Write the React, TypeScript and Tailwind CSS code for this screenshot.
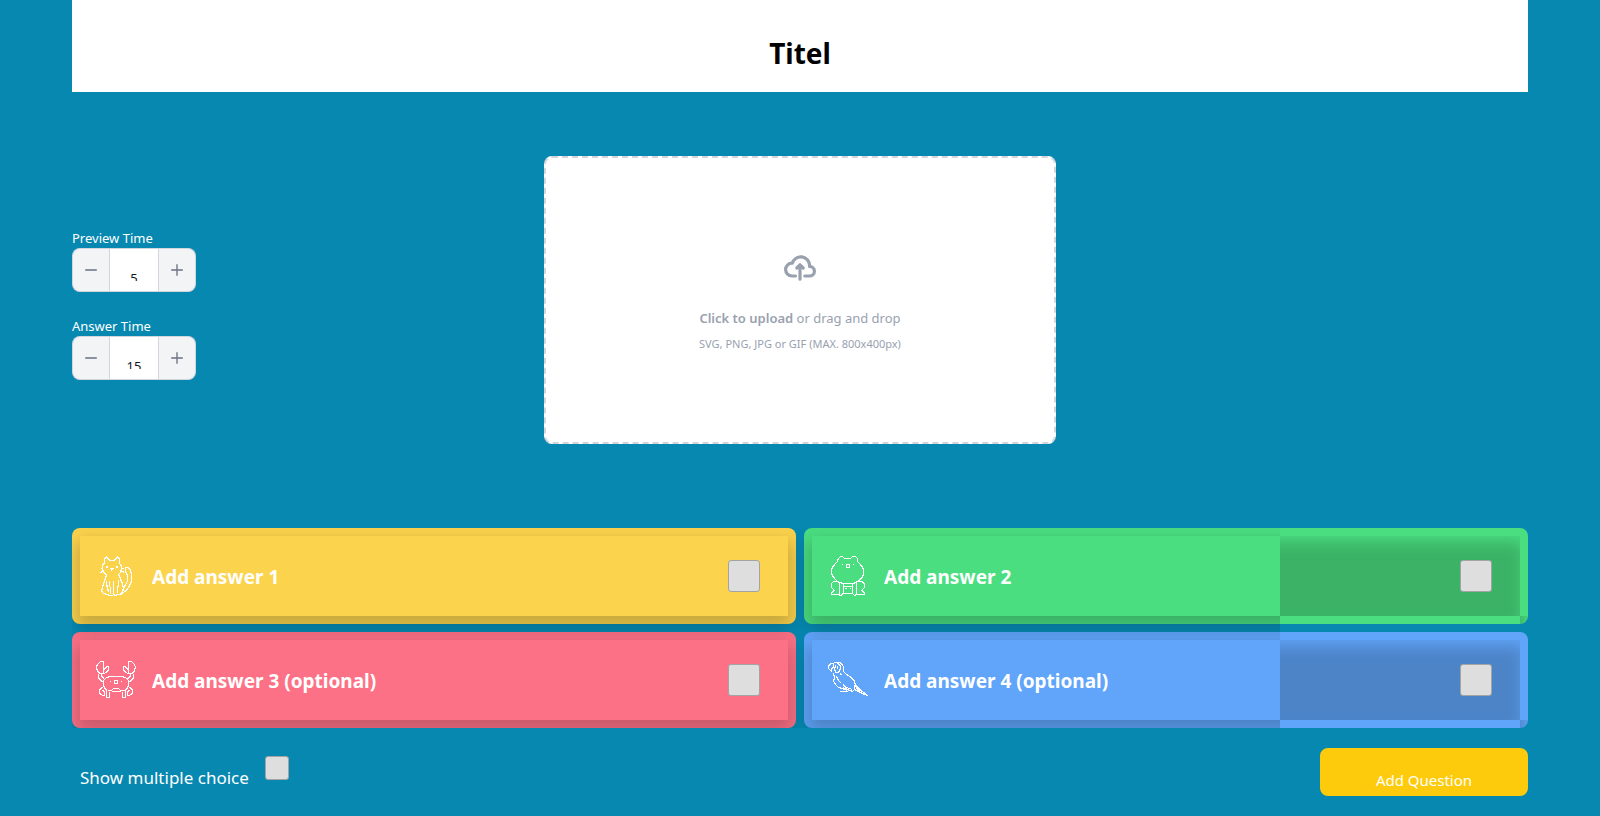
import { useState, type ReactNode } from "react";

const strokeProps = {
  width: 40,
  height: 40,
  viewBox: "0 0 40 40",
  fill: "none",
  stroke: "#fff",
  strokeWidth: 1.25,
  shapeRendering: "crispEdges" as const,
  "aria-hidden": true,
};

function CatIcon() {
  return (
    <svg {...strokeProps}>
      <path d="M6.500 13V9.500L8.500 7V3L10.500 .5L13.500 4.500H18.500L21.500 .5L23.500 3V7L25.500 10.500V13L24.500 16.500L22.500 18.500L24.500 23L26.500 28L27.500 33L26.500 36.500L23.500 38.500H19.500" />
      <path d="M6.500 13.500L7.500 16.500L10.500 18.500L9.500 22.500L7.500 27.500L6.500 32L5.500 35L7.500 37.500L11.500 38.500L13.500 39.500H16.500L17.500 38.500L19.500 39.500L21.500 38.500" />
      <path d="M4.500 12.500H7M4.500 16.500L8 14.500M25 12.500H27.500M25 14.500L28 16.500" />
      <path d="M13.500 24.500V30L14.500 32V38M17.500 25V38M22.500 24V29L21.500 32V37M10.500 25V28L11.500 32L12.500 36" />
      <path d="M29.500 15.500V11.500H32.500L34.500 14.500L35.500 18V25L33.500 30L30.500 34L27.500 36.500L24.500 38.500M29.500 15.500L31.500 19V25L29.500 29L27.500 32.500L26 34" />
      <path d="M10 10h2v2h-2zM20 10h2v2h-2zM14 11.500h4v1h-1v1h-1v1h-1v-2h-1z" fill="#fff" stroke="none" />
    </svg>
  );
}

function BearIcon() {
  return (
    <svg {...strokeProps}>
      <path d="M9.500 5.500L10.500 2.500L12.500 .5H14.500L16.500 2.500H22.500L24.500 .5H27.500L29.500 2.500V5.500L32.500 8.500L35.500 13V19L33.500 22.500L29.500 25.500L25.500 27.500H14.500L9.500 25.500L6.500 22.500L3.500 18V13L6.500 8.500L9.500 5.500" />
      <path d="M18.500 8.500h3v3h-3z" />
      <path d="M14 8h1v1h-1zM25 8h1v1h-1z" fill="#fff" stroke="none" />
      <path d="M9.500 25.500H5.500L3.500 27.500V31.500L6.500 34.500L3.500 36.500V38.500H10.500L12.500 39.500L15.500 37.500M29.500 25.500H33.500L36.500 27.500V31.500L33.500 34.500L36.500 36.500V38.500H28.500L26.500 39.500L24.500 37.500" />
      <path d="M11.500 26.500V38M15.500 28V37.500H24.500V28M28.500 27V38M15.500 30.500H24M17 32.500H18.500M21.500 32.500H23" />
    </svg>
  );
}

function CrabIcon() {
  return (
    <svg {...strokeProps}>
      <path d="M7.500 13.500V1.500H4.500L1.500 4.500L.5 7.500L1.500 10.500L3.500 13.500H7.500L10.500 12.500L12.500 9.500V6.500H10.500L8.500 9.500H7.500" />
      <path d="M32.500 13.500V1.500H35.500L38.500 4.500L39.500 7.500L38.500 10.500L36.500 13.500H32.500L29.500 12.500L27.500 9.500V6.500H29.500L31.500 9.500H32.500" />
      <path d="M2.500 14V17.500L5.500 21.500H7.500M5.500 14V16.500L8.500 18.500M37.500 14V17.500L34.500 21.500H32.500M34.500 14V16.500L31.500 18.500" />
      <path d="M11.500 30.500L8.500 28.500L7.500 25V20.500L10.500 17.500L14.500 16.500H25.500L29.500 17.500L32.500 20.500V25L31.500 28.500L28.500 30.500M11.500 30.500H15.500L17.500 28.500H22.500L24.500 30.500H28.500M15.500 31.500H24.500" />
      <path d="M18.500 20.500h3v3h-3z" />
      <path d="M14 21h1v1h-1zM25 21h1v1h-1z" fill="#fff" stroke="none" />
      <path d="M10.500 31V37.500H13.500V31.500M26.500 31.500V37.500H29.500V31M6.500 27L3.500 30V33L6.500 35.500H8.500V32L6.500 30M33.500 27L36.500 30V33L33.500 35.500H31.500V32L33.500 30" />
    </svg>
  );
}

function ParrotIcon() {
  return (
    <svg {...strokeProps}>
      <path d="M3.500 11.500L.5 8.500V5.500L3.500 3.500H5.500V7.500L3.500 8.500V11.500M4.500 3.500L7.500 2.500H11.500L14.500 4.500L15.500 7.500V11.500L18.500 14.500L23.500 17.500L26.500 21.500L27.500 25L31.500 29L35.500 32.500L39.500 35.500L34.500 33.500L28.500 30.500L26.500 29.500V24.500" />
      <path d="M5.500 13.500L6.500 18L5.500 21L7.500 24.500L10.500 27.500L14.500 28.500L19.500 29.500L24.500 31.500L26.500 29.500M7.500 5.500L6.500 9L7.500 12.500H10.500L12.500 9V5.500L9.500 3.500M9.500 6V9" />
      <path d="M8.500 16.500L10.500 20.500L13.500 23.500M14.500 24.500L18.500 27.500L24.500 29.500M12.500 13.500L13.500 15.500M15.500 27V30M18.500 28V30.500M12 31.500H19.500M27.500 26.500L31.500 31" />
    </svg>
  );
}

function CheckBox({ label, className }: { label: string; className: string }) {
  return (
    <input
      type="checkbox"
      aria-label={label}
      className={`shrink-0 appearance-none rounded-[3px] border border-[#a3a3a3] bg-[#dedede] checked:bg-cyan-700 ${className}`}
    />
  );
}

function TimeInput({ id, label, initial }: { id: string; label: string; initial: number }) {
  const [value, setValue] = useState(initial);
  const button = "flex items-center justify-center border-gray-300 bg-gray-100 text-gray-500";
  return (
    <div className="w-[124px]">
      <label htmlFor={id} className="block text-[13px] leading-5 text-white">
        {label}
      </label>
      <div className="flex h-11">
        <button
          type="button"
          aria-label={`Decrease ${label}`}
          onClick={() => setValue(Math.max(0, value - 1))}
          className={`${button} w-[37px] shrink-0 rounded-l-lg border border-r-0`}
        >
          <svg className="h-3 w-3" fill="none" viewBox="0 0 18 2" aria-hidden="true">
            <path stroke="currentColor" strokeLinecap="round" strokeWidth="2" d="M1 1h16" />
          </svg>
        </button>
        <div className="h-11 min-w-0 flex-1 border border-gray-300 bg-white pt-4">
          <input
            id={id}
            type="text"
            value={value}
            onChange={(e) => setValue(Number(e.target.value) || 0)}
            className="block h-4 w-full overflow-clip bg-transparent pt-[10px] text-center text-[13px] leading-5 text-gray-900 outline-none"
          />
        </div>
        <button
          type="button"
          aria-label={`Increase ${label}`}
          onClick={() => setValue(value + 1)}
          className={`${button} w-[37px] shrink-0 rounded-r-lg border border-l-0`}
        >
          <svg className="h-3 w-3" fill="none" viewBox="0 0 18 18" aria-hidden="true">
            <path stroke="currentColor" strokeLinecap="round" strokeWidth="2" d="M9 1v16M1 9h16" />
          </svg>
        </button>
      </div>
    </div>
  );
}

interface AnswerProps {
  n: number;
  text: string;
  color: string;
  icon: ReactNode;
  shade?: string;
}

function Answer({ n, text, color, icon, shade }: AnswerProps) {
  return (
    <div className={`rounded-lg p-2 ${color}`}>
      <div className="relative isolate">
        <div
          className={`absolute inset-0 -z-10 shadow-[0_9px_16px_4px_rgba(0,0,0,0.2)] ${color} ${
            shade ? "[clip-path:inset(-24px_240px_-24px_-24px)]" : ""
          }`}
        />
        {shade && (
          <>
            <div className="absolute inset-y-0 right-0 -z-10 w-60 overflow-hidden">
              <div className={`ml-[-32px] h-full ${shade}`} />
            </div>
            <div className="absolute -right-2 -bottom-2 -z-10 h-2 w-2 rounded-br-lg bg-linear-to-r from-black/15 to-black/5" />
          </>
        )}
        <div className="flex h-20 items-center gap-4 pr-7 pl-4">
          {icon}
          <input
            type="text"
            aria-label={`Answer ${n}`}
            placeholder={text}
            className="min-w-0 flex-1 bg-transparent pt-0.5 text-[19px] leading-7 font-bold text-white outline-none placeholder:text-white placeholder:opacity-100"
          />
          <CheckBox label={`Answer ${n} is correct`} className="h-8 w-8" />
        </div>
      </div>
    </div>
  );
}

export default function App() {
  return (
    <div className="min-h-screen bg-[#0788b1] px-[4.5%] font-['Noto_Sans','Open_Sans',sans-serif]">
      <header className="flex h-23 items-center justify-center bg-white pt-3.5">
        <h1 className="text-[28px] leading-9 font-bold text-black">Titel</h1>
      </header>

      <main>
        <section className="grid grid-cols-[1fr_minmax(0,512px)_1fr] items-center pt-16 pb-21">
          <div className="flex flex-col gap-6 pt-2">
            <TimeInput id="preview-time" label="Preview Time" initial={5} />
            <TimeInput id="answer-time" label="Answer Time" initial={15} />
          </div>
          <label
            htmlFor="upload"
            className="flex h-72 cursor-pointer flex-col items-center justify-center rounded-lg border-2 border-dashed border-gray-300 bg-white pt-1 text-gray-400"
          >
            <svg className="mb-4 h-8 w-8" fill="none" viewBox="0 0 20 16" aria-hidden="true">
              <path
                stroke="currentColor"
                strokeLinecap="round"
                strokeLinejoin="round"
                strokeWidth="2"
                d="M13 13h3a3 3 0 0 0 0-6h-.025A5.56 5.56 0 0 0 16 6.500 5.500 5.500 0 0 0 5.207 5.021C5.137 5.017 5.071 5 5 5a4 4 0 0 0 0 8h2.167M10 15V6m0 0L8 8m2-2 2 2"
              />
            </svg>
            <p className="mt-2 mb-2 text-[13px] leading-5">
              <span className="font-semibold">Click to upload</span> or drag and drop
            </p>
            <p className="text-[11px] leading-4">SVG, PNG, JPG or GIF (MAX. 800x400px)</p>
            <input id="upload" type="file" className="sr-only" />
          </label>
        </section>

        <section className="grid grid-cols-2 gap-2 overflow-hidden">
          <Answer n={1} text="Add answer 1" color="bg-[#fcd34d]" icon={<CatIcon />} />
          <Answer
            n={2}
            text="Add answer 2"
            color="bg-[#4ade80]"
            shade="bg-[#3bb266] shadow-[inset_0_9px_16px_-4px_#4ade80]"
            icon={<BearIcon />}
          />
          <Answer n={3} text="Add answer 3 (optional)" color="bg-[#fd7186]" icon={<CrabIcon />} />
          <Answer
            n={4}
            text="Add answer 4 (optional)"
            color="bg-[#60a5fa]"
            shade="bg-[#4d84c8] shadow-[inset_0_9px_16px_-4px_#60a5fa]"
            icon={<ParrotIcon />}
          />
        </section>

        <section className="flex items-start justify-between pt-5 pb-5">
          <div className="flex items-start gap-4 pt-2 pl-2">
            <label htmlFor="multiple" className="pt-2 text-[17px] leading-7 text-white">
              Show multiple choice
            </label>
            <input
              id="multiple"
              type="checkbox"
              className="h-6 w-6 shrink-0 appearance-none rounded-[3px] border border-[#a3a3a3] bg-[#dedede] checked:bg-cyan-700"
            />
          </div>
          <button
            type="button"
            className="h-12 w-52 rounded-lg bg-[#fdcb0b] pt-4 text-[15px] leading-6 text-white"
          >
            Add Question
          </button>
        </section>
      </main>
    </div>
  );
}
